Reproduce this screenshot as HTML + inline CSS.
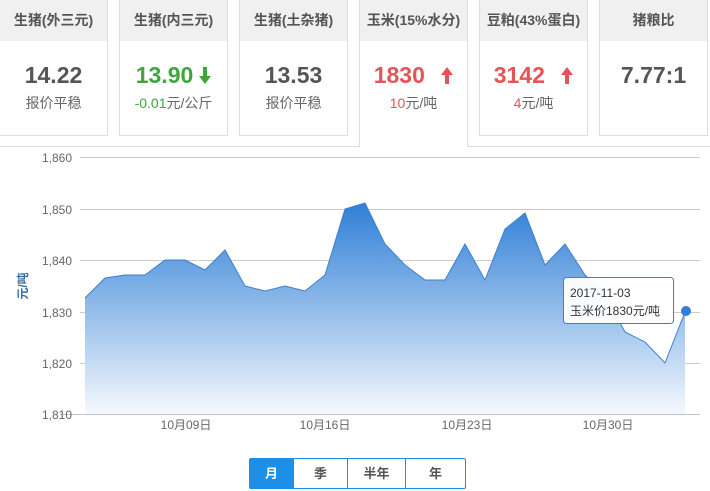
<!DOCTYPE html>
<html><head><meta charset="utf-8"><style>
*{margin:0;padding:0;box-sizing:border-box}
body{width:710px;height:491px;background:#fff;font-family:"Liberation Sans","Noto Sans CJK SC",sans-serif;position:relative;overflow:hidden}
.c{position:absolute;top:-1px;width:109px;height:137px;border:1px solid #ddd;background:#fff;text-align:center}
.c .h{height:41px;background:#f0f0f0;line-height:40px;font-size:14px;color:#555;font-weight:bold}
.c .v{font-size:23px;font-weight:bold;color:#555;margin-top:20px;line-height:28px}
.c .s{font-size:14px;color:#666;margin-top:4px}
.sel{height:148px;border-bottom:none;z-index:2}
.line{position:absolute;top:146px;left:0;width:710px;height:1px;background:#ddd}
.c .g{color:#3fa63f}.c .r{color:#e85258}
.btns{position:absolute;left:249px;top:458px;height:31px;border:1px solid #1e8fe6;border-radius:2px;display:flex;font-size:13px;font-weight:bold;color:#555}
.btns div{line-height:29px;text-align:center;border-right:1px solid #1e8fe6}
.btns div:last-child{border-right:none}
svg.a{vertical-align:-1px;margin-left:6px}
</style></head><body>
<div class="c" style="left:-1px"><div class="h">生猪(外三元)</div><div class="v">14.22</div><div class="s">报价平稳</div></div>
<div class="c" style="left:119px"><div class="h">生猪(内三元)</div><div class="v g">13.90<svg class="a" width="12" height="17" viewBox="0 0 12 17"><path d="M4 0h4v9h4l-6 8-6-8h4z" fill="#3fa63f"/></svg></div><div class="s"><span class="g">-0.01</span>元/公斤</div></div>
<div class="c" style="left:239px"><div class="h">生猪(土杂猪)</div><div class="v">13.53</div><div class="s">报价平稳</div></div>
<div class="line"></div>
<div class="c sel" style="left:359px"><div class="h">玉米(15%水分)</div><div class="v r">1830 <svg class="a" width="12" height="17" viewBox="0 0 12 17" style="margin-left:10px"><path d="M4 17h4V8h4L6 0 0 8h4z" fill="#e85258"/></svg></div><div class="s"><span class="r">10</span>元/吨</div></div>
<div class="c" style="left:479px"><div class="h">豆粕(43%蛋白)</div><div class="v r">3142 <svg class="a" width="12" height="17" viewBox="0 0 12 17" style="margin-left:10px"><path d="M4 17h4V8h4L6 0 0 8h4z" fill="#e85258"/></svg></div><div class="s"><span class="r">4</span>元/吨</div></div>
<div class="c" style="left:599px"><div class="h">猪粮比</div><div class="v">7.77:1</div></div>
<svg style="position:absolute;left:0;top:0" width="710" height="491">
<defs><linearGradient id="gr" x1="0" y1="203" x2="0" y2="413" gradientUnits="userSpaceOnUse"><stop offset="0" stop-color="#2f7fd6"/><stop offset="1" stop-color="#f4f8fd"/></linearGradient></defs>
<g stroke="#ccc" stroke-width="1">
<line x1="80" y1="157.5" x2="700" y2="157.5"/><line x1="80" y1="209.5" x2="700" y2="209.5"/><line x1="80" y1="260.5" x2="700" y2="260.5"/><line x1="80" y1="312.5" x2="700" y2="312.5"/><line x1="80" y1="363.5" x2="700" y2="363.5"/><line x1="60" y1="414.5" x2="700" y2="414.5" stroke="#b8c4d4"/>
<line x1="136.5" y1="408" x2="136.5" y2="414"/><line x1="239.5" y1="408" x2="239.5" y2="414"/><line x1="343.5" y1="408" x2="343.5" y2="414"/><line x1="446.5" y1="408" x2="446.5" y2="414"/>
</g>
<polygon fill="url(#gr)" points="85,298 105,278 125,275 145,275 165,260 185,260 205,270 225,250 245,286 265,291 285,286 305,291 325,275 345,209 365,203 385,244 405,265 425,280 445,280 465,244 485,280 505,229 525,213 545,265 565,244 585,275 605,295 625,332 645,342 665,363 685,312 685,414 85,414"/>
<polyline fill="none" stroke="#3d7fcf" stroke-width="1" points="85,298 105,278 125,275 145,275 165,260 185,260 205,270 225,250 245,286 265,291 285,286 305,291 325,275 345,209 365,203 385,244 405,265 425,280 445,280 465,244 485,280 505,229 525,213 545,265 565,244 585,275 605,295 625,332 645,342 665,363 685,312"/>
<circle cx="686" cy="311" r="5" fill="#2f7fd6"/>
<g font-size="12" fill="#666" text-anchor="end">
<text x="72" y="162">1,860</text><text x="72" y="214">1,850</text><text x="72" y="265">1,840</text><text x="72" y="317">1,830</text><text x="72" y="368">1,820</text><text x="72" y="419">1,810</text>
</g>
<g font-size="12" fill="#666" text-anchor="middle">
<text x="186" y="429">10月09日</text><text x="325" y="429">10月16日</text><text x="467" y="429">10月23日</text><text x="608" y="429">10月30日</text>
</g>
<text transform="translate(27,286) rotate(-90)" font-size="12" fill="#3a6ea5" text-anchor="middle" font-weight="bold">元/吨</text>
<rect x="563.5" y="277.5" width="110" height="46" rx="3" fill="#fff" fill-opacity="0.95" stroke="#3d7fcf"/>
<text x="570" y="297" font-size="12" fill="#333">2017-11-03</text>
<text x="570" y="315" font-size="12" fill="#333">玉米价1830元/吨</text>
</svg>
<div class="btns"><div style="width:44px;background:#1e8fe6;color:#fff">月</div><div style="width:54px">季</div><div style="width:58px">半年</div><div style="width:59px">年</div></div>
</body></html>
